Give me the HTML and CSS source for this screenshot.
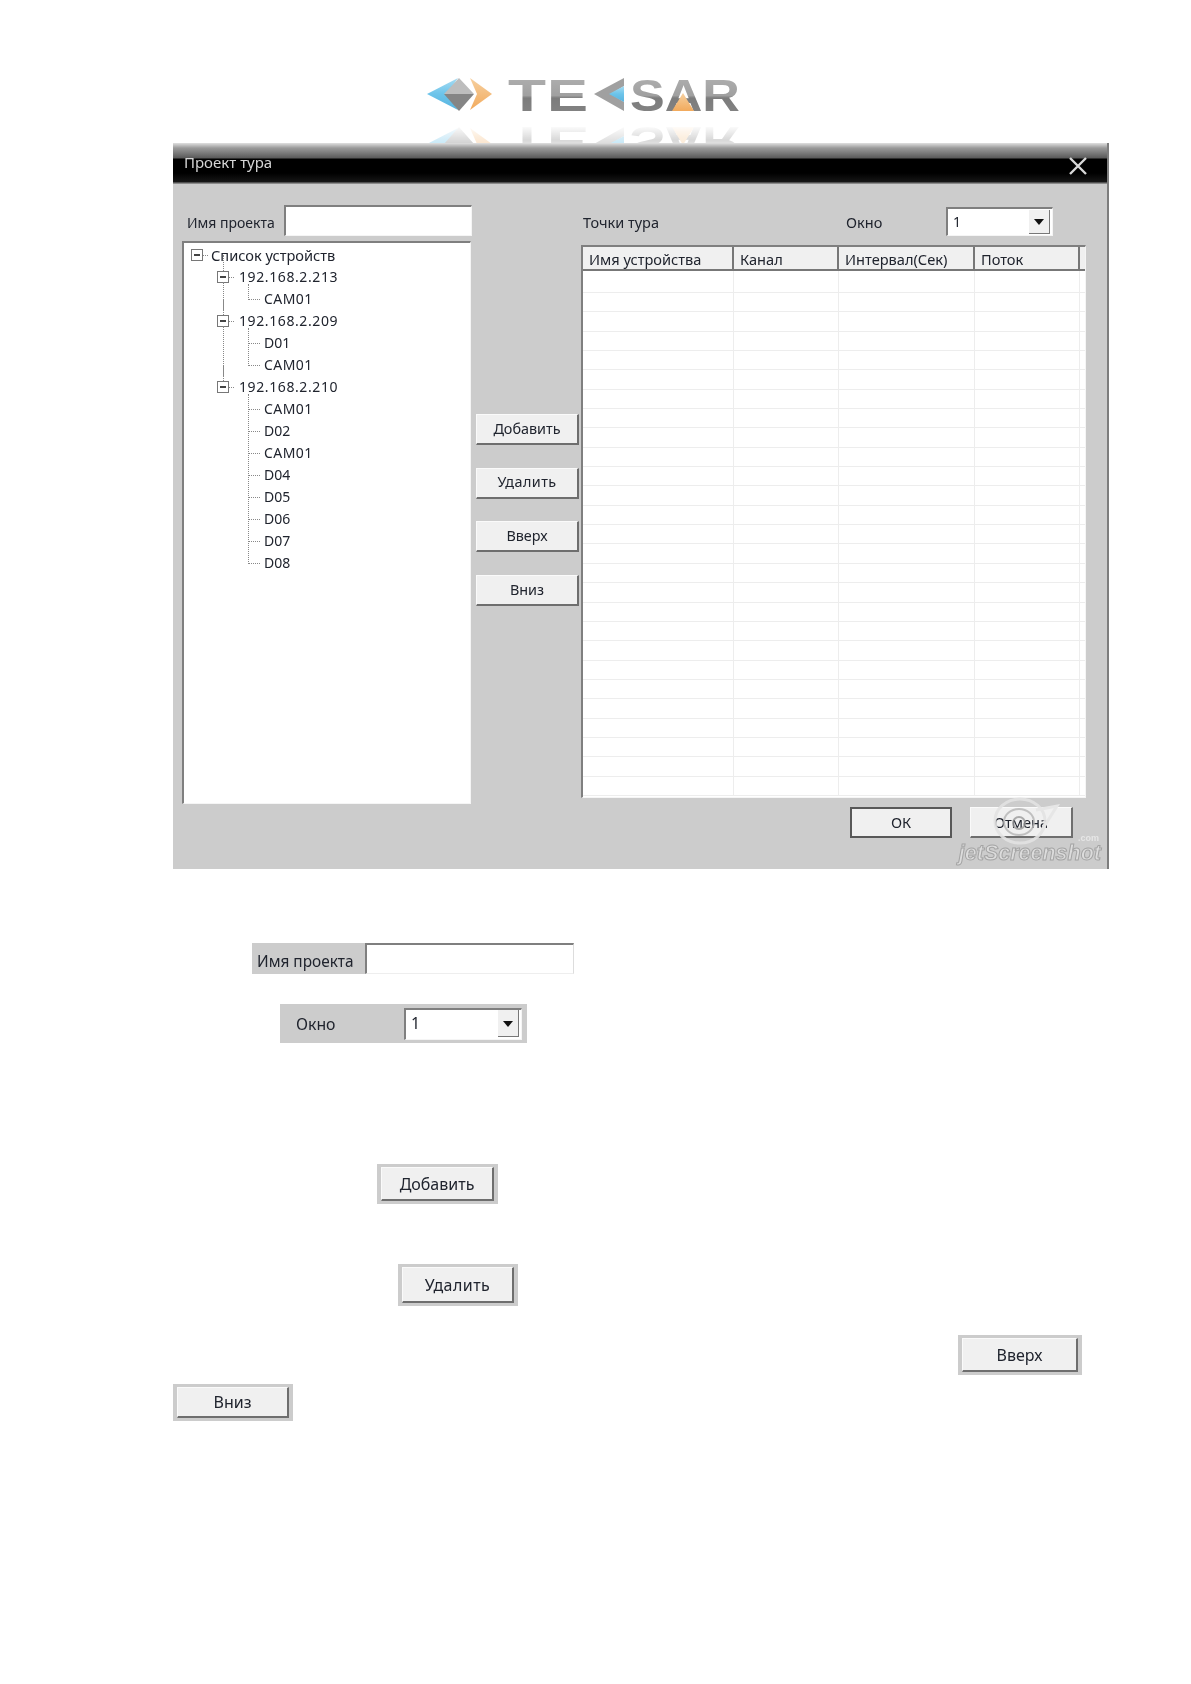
FILE: index.html
```html
<!DOCTYPE html>
<html lang="ru">
<head>
<meta charset="utf-8">
<title>Проект тура</title>
<link rel="stylesheet" href="styles.css">
</head>
<body>
<svg class="logo" viewBox="0 0 320 68" width="320" height="68" aria-label="TESAR">
  <defs>
    <linearGradient id="metal" x1="0" y1="0" x2="0" y2="1">
      <stop offset="0" stop-color="#b4b4b4"/><stop offset=".5" stop-color="#a0a0a0"/><stop offset=".55" stop-color="#7c7c7c"/><stop offset="1" stop-color="#868686"/>
    </linearGradient>
    <linearGradient id="blue" x1="0" y1="0" x2="0" y2="1">
      <stop offset="0" stop-color="#a8dcf2"/><stop offset=".5" stop-color="#6cc4ea"/><stop offset="1" stop-color="#58b4e0"/>
    </linearGradient>
    <linearGradient id="orange" x1="0" y1="0" x2="0" y2="1">
      <stop offset="0" stop-color="#f6d0a0"/><stop offset="1" stop-color="#f2aa5c"/>
    </linearGradient>
    <linearGradient id="fade" x1="0" y1="0" x2="0" y2="1">
      <stop offset="0" stop-color="#fff" stop-opacity=".04"/><stop offset="1" stop-color="#fff" stop-opacity=".36"/>
    </linearGradient>
    <mask id="reflectMask"><rect x="0" y="52" width="320" height="16" fill="url(#fade)"/></mask>
    <g id="mark">
      <polygon points="2,19 33,3 22,19 33,35" fill="url(#blue)"/>
      <polygon points="67,19 45,3 52,19 45,35" fill="url(#orange)"/>
      <polygon points="34,3 49,19 19,19" fill="#bdbdbd"/>
      <polygon points="19,19 49,19 34,36" fill="#858585"/>
      <text x="83" y="36" class="logo-text" fill="url(#metal)" textLength="38" lengthAdjust="spacingAndGlyphs">T</text>
      <text x="122" y="36" class="logo-text" fill="url(#metal)" textLength="41" lengthAdjust="spacingAndGlyphs">E</text>
      <polygon points="169,19 199,3 199,11 186,19 199,27 199,36" fill="#a0a0a0"/>
      <polygon points="184,19 199,11 199,27" fill="url(#blue)"/>
      <text x="205" y="36" class="logo-text" fill="url(#metal)" textLength="110" lengthAdjust="spacingAndGlyphs">SAR</text>
      <polygon points="258,18 269,36 247,36" fill="url(#orange)"/>
    </g>
  </defs>
  <use href="#mark"/>
  <g mask="url(#reflectMask)"><use href="#mark" transform="translate(0 88) scale(1 -1)"/></g>
</svg>

<main class="dialog">
  <header class="titlebar">
    <span class="title">Проект тура</span>
    <svg class="close" viewBox="0 0 18 18" width="18" height="18"><path d="M1 1 17 17M17 1 1 17" stroke="#d8d8d8" stroke-width="2.4" fill="none"/></svg>
  </header>
  <div class="dialog-body">
    <section class="col-left">
      <div class="name-row">
        <label class="name-label">Имя проекта</label>
        <div class="sunken name-input"></div>
      </div>
      <div class="sunken tree">
        <ul class="tree-root">
          <li class="root-node">
            <span class="node"><i class="toggle"></i><b class="dash"></b><span class="root-text">Список устройств</span></span>
            <ul class="level1">
              <li>
                <span class="node ip"><i class="toggle"></i><b class="dash"></b>192.168.2.213</span>
                <ul class="level2"><li class="cam">CAM01</li></ul>
              </li>
              <li>
                <span class="node ip"><i class="toggle"></i><b class="dash"></b>192.168.2.209</span>
                <ul class="level2"><li>D01</li><li class="cam">CAM01</li></ul>
              </li>
              <li>
                <span class="node ip"><i class="toggle"></i><b class="dash"></b>192.168.2.210</span>
                <ul class="level2"><li class="cam">CAM01</li><li>D02</li><li class="cam">CAM01</li><li>D04</li><li>D05</li><li>D06</li><li>D07</li><li>D08</li></ul>
              </li>
            </ul>
          </li>
        </ul>
      </div>
    </section>

    <section class="col-mid">
      <button class="btn">Добавить</button>
      <button class="btn btn-spaced">Удалить</button>
      <button class="btn">Вверх</button>
      <button class="btn">Вниз</button>
    </section>

    <section class="col-right">
      <div class="points-row">
        <span class="points-label">Точки тура</span>
        <span class="window-label">Окно</span>
        <div class="sunken select"><span class="select-value">1</span><span class="select-arrow"></span></div>
      </div>
      <div class="sunken table-wrap">
        <table class="grid">
          <thead><tr><th class="c1">Имя устройства</th><th class="c2">Канал</th><th class="c3">Интервал(Сек)</th><th class="c4">Поток</th><th class="c5"></th></tr></thead>
          <tbody>
            <tr><td></td><td></td><td></td><td></td><td></td></tr><tr><td></td><td></td><td></td><td></td><td></td></tr><tr><td></td><td></td><td></td><td></td><td></td></tr>
            <tr><td></td><td></td><td></td><td></td><td></td></tr><tr><td></td><td></td><td></td><td></td><td></td></tr><tr><td></td><td></td><td></td><td></td><td></td></tr>
            <tr><td></td><td></td><td></td><td></td><td></td></tr><tr><td></td><td></td><td></td><td></td><td></td></tr><tr><td></td><td></td><td></td><td></td><td></td></tr>
            <tr><td></td><td></td><td></td><td></td><td></td></tr><tr><td></td><td></td><td></td><td></td><td></td></tr><tr><td></td><td></td><td></td><td></td><td></td></tr>
            <tr><td></td><td></td><td></td><td></td><td></td></tr><tr><td></td><td></td><td></td><td></td><td></td></tr><tr><td></td><td></td><td></td><td></td><td></td></tr>
            <tr><td></td><td></td><td></td><td></td><td></td></tr><tr><td></td><td></td><td></td><td></td><td></td></tr><tr><td></td><td></td><td></td><td></td><td></td></tr>
            <tr><td></td><td></td><td></td><td></td><td></td></tr><tr><td></td><td></td><td></td><td></td><td></td></tr><tr><td></td><td></td><td></td><td></td><td></td></tr>
            <tr><td></td><td></td><td></td><td></td><td></td></tr><tr><td></td><td></td><td></td><td></td><td></td></tr><tr><td></td><td></td><td></td><td></td><td></td></tr>
            <tr><td></td><td></td><td></td><td></td><td></td></tr><tr><td></td><td></td><td></td><td></td><td></td></tr><tr><td></td><td></td><td></td><td></td><td></td></tr>
          </tbody>
        </table>
      </div>
      <div class="actions">
        <button class="btn btn-ok">ОК</button>
        <button class="btn btn-cancel">Отмена</button>
      </div>
    </section>
  </div>
  <div class="watermark">
    <svg class="swirl" viewBox="0 0 72 50" width="72" height="50">
      <ellipse cx="32" cy="25" rx="25" ry="22" fill="none" stroke="#e2e2e2" stroke-width="3" opacity=".9"/>
      <ellipse cx="31" cy="26" rx="15" ry="13" fill="none" stroke="#b4b4b4" stroke-width="2" opacity=".8"/>
      <circle cx="31" cy="27" r="6" fill="none" stroke="#999" stroke-width="2" opacity=".8"/>
      <path d="M54 34 69 10 48 14" fill="none" stroke="#e6e6e6" stroke-width="3"/>
    </svg>
    <span class="wm-com">.com</span>
    <span class="wm-text">jetScreenshot</span>
  </div>
</main>

<div class="frag-name">
  <span class="frag-name-label">Имя проекта</span>
  <div class="sunken frag-name-input"></div>
</div>

<div class="frag-window">
  <span class="frag-window-label">Окно</span>
  <div class="sunken select frag-select"><span class="select-value">1</span><span class="select-arrow"></span></div>
</div>

<div class="frag-btn frag-add"><button class="btn">Добавить</button></div>
<div class="frag-btn frag-del"><button class="btn btn-spaced">Удалить</button></div>
<div class="frag-line">
  <div class="frag-btn frag-up"><button class="btn">Вверх</button></div>
</div>
<div class="frag-btn frag-down"><button class="btn">Вниз</button></div>
</body>
</html>
```

FILE: styles.css
```css
* { box-sizing: border-box; }

html, body { margin: 0; padding: 0; }

body {
  width: 1191px;
  min-height: 1684px;
  background: #fff;
  color: #20242e;
  font: 14px/1 "Noto Sans", "Liberation Sans", sans-serif;
}

ul { list-style: none; margin: 0; padding: 0; }

/* logo */
.logo { display: block; margin: 75px 0 0 425px; filter: blur(.7px); }
.logo-text { font: bold 45px "Liberation Sans", sans-serif; }

/* dialog frame */
.dialog {
  position: relative;
  width: 936px;
  height: 726px;
  margin-left: 173px;
  background: #ccc;
  border-right: 2px solid #7d7d7d;
  filter: blur(.35px);
}

.titlebar {
  display: flex;
  align-items: center;
  justify-content: space-between;
  height: 41px;
  padding: 0 20px 0 11px;
  background: linear-gradient(#e0e0e0 0, #9a9a9a 5px, #5a5a5a 15px, #000 16px, #000 30px, #161616 39px, #8a8a8a 40px);
}
.title { color: #d6d6d6; font-size: 15px; position: relative; top: -1px; }
.close { position: relative; top: 2px; }

.dialog-body { display: flex; }

/* sunken control look */
.sunken {
  background: #fff;
  border-style: solid;
  border-width: 2px 1px 1px 2px;
  border-color: #7f7f7f #f5f5f5 #f5f5f5 #7f7f7f;
}

/* left column */
.col-left { width: 291px; margin-left: 9px; padding-top: 21px; }
.name-row { display: flex; align-items: center; height: 31px; }
.name-label { width: 102px; padding-left: 5px; position: relative; top: 2px; }
.name-input { width: 188px; height: 31px; }

.tree { width: 289px; height: 563px; margin-top: 5px; padding-top: 1px; font-size: 14px; overflow: hidden; }

.node { display: flex; align-items: center; height: 22px; }
.toggle {
  position: relative;
  flex: none;
  display: block;
  width: 12px;
  height: 12px;
  background: #fff;
  border: 1px solid #777;
}
.toggle::after {
  content: "";
  position: absolute;
  left: 2px;
  top: 4px;
  width: 6px;
  height: 2px;
  background: #444;
}
.dash { flex: none; width: 5px; margin: 0 5px 0 0; border-top: 1px dotted #888; }

.root-node > .node { padding-left: 7px; }
.root-node > .node .dash { margin-right: 3px; }
.root-text { font-size: 14.6px; }

.level1 { position: relative; }
.level1 > li { position: relative; }
.level1 > li > .node { padding-left: 33px; }
.ip { letter-spacing: .6px; }
.level1 > li::before {
  content: "";
  position: absolute;
  left: 39px;
  top: -11px;
  height: 16px;
  border-left: 1px dotted #888;
}
.level1 > li:not(:last-child)::after {
  content: "";
  position: absolute;
  left: 39px;
  top: 16px;
  bottom: 0;
  border-left: 1px dotted #888;
}

.level2 li {
  position: relative;
  height: 22px;
  line-height: 22px;
  padding-left: 80px;
}
.level2 .cam { letter-spacing: .45px; }
.level2 li::before {
  content: "";
  position: absolute;
  left: 64px;
  top: -11px;
  width: 11px;
  height: 22px;
  border-left: 1px dotted #888;
  border-bottom: 1px dotted #888;
}
.level2 li:first-child::before { top: -4px; height: 15px; }

/* middle column */
.col-mid {
  display: flex;
  flex-direction: column;
  gap: 22.7px;
  width: 103px;
  margin-left: 3px;
  padding-top: 230px;
  font-size: 14.4px;
}

.btn {
  display: block;
  width: 100%;
  height: 31px;
  padding: 0;
  background: #f0f0f0;
  border-style: solid;
  border-width: 1px 2px 2px 1px;
  border-color: #fafafa #6e6e6e #6e6e6e #fafafa;
  border-radius: 0;
  color: #20242e;
  font: inherit;
}
.btn-spaced { letter-spacing: .45px; }

/* right column */
.col-right { width: 506px; margin-left: 2px; padding-top: 23px; }
.points-row { display: flex; align-items: center; height: 29px; }
.points-label { width: 265px; padding-left: 2px; position: relative; top: 1px; font-size: 14.5px; }
.window-label { width: 100px; position: relative; top: 1px; font-size: 14.5px; }

.select {
  display: flex;
  align-items: center;
  justify-content: space-between;
  width: 107px;
  height: 29px;
  padding: 1px 2px 2px 5px;
}
.select-arrow {
  position: relative;
  display: block;
  width: 21px;
  height: 24px;
  background: #f0f0f0;
  border-right: 1px solid #777;
  border-bottom: 1px solid #777;
}
.select-arrow::after {
  content: "";
  position: absolute;
  left: 5px;
  top: 9px;
  border-style: solid;
  border-width: 6px 5px 0;
  border-color: #111 transparent transparent;
}

.table-wrap { width: 505px; height: 553px; margin-top: 9px; overflow: hidden; }
.grid { width: 503px; table-layout: fixed; border-collapse: collapse; font-size: 14.6px; }
.grid th {
  height: 23px;
  padding: 3px 0 0 6px;
  background: #f0f0f0;
  border-right: 2px solid #777;
  border-bottom: 2px solid #777;
  font-weight: 400;
  text-align: left;
  white-space: nowrap;
}
.grid .c1 { width: 150px; }
.grid .c2 { width: 105px; }
.grid .c3 { width: 136px; }
.grid .c4 { width: 105px; }
.grid .c5 { border-right: 0; padding: 0; }
.grid td { height: 19.35px; padding: 0; border-right: 1px solid #ededed; border-bottom: 1px solid #ededed; }
.grid tbody tr:first-child td { height: 22.5px; }

.actions { display: flex; justify-content: flex-end; gap: 18px; margin-top: 9px; padding-right: 14px; font-size: 14.6px; }
.btn-ok { width: 102px; border: 2px solid #585858; }
.btn-cancel { width: 103px; }

/* watermark over the dialog */
.watermark { position: absolute; right: 0; bottom: 0; width: 160px; height: 76px; pointer-events: none; }
.swirl { position: absolute; left: 41px; top: 3px; }
.wm-com { position: absolute; right: 8px; top: 41px; color: #e6e6e6; font: bold 9px/1 "Liberation Sans", sans-serif; }
.wm-text {
  position: absolute;
  right: 6px;
  bottom: 5px;
  color: #dcdcdc;
  font: italic bold 21.5px/1 "Liberation Sans", sans-serif;
  -webkit-text-stroke: 1px #a4a4a4;
  white-space: nowrap;
}

/* document fragments */
.frag-name { display: flex; width: 322px; height: 31px; margin: 74px 0 0 252px; filter: blur(.35px); }
.frag-name-label { display: flex; align-items: center; width: 113px; padding: 6px 0 0 5px; background: #ccc; font-size: 15.4px; }
.frag-name-input { width: 209px; height: 31px; border-right-color: #ddd; border-bottom-color: #eee; }

.frag-window {
  display: flex;
  align-items: center;
  width: 247px;
  height: 39px;
  margin: 30px 0 0 280px;
  padding-left: 16px;
  background: #ccc;
  font-size: 15.8px;
  filter: blur(.35px);
}
.frag-window-label { width: 108px; position: relative; top: 1px; }
.frag-select { width: 118px; height: 32px; }
.frag-select .select-arrow { height: 27px; }
.frag-select .select-arrow::after { top: 11px; }

.frag-btn { background: #ccc; font-size: 16px; padding: 3px 4px 3px 4px; filter: blur(.35px); }
.frag-btn .btn { height: 100%; }
.frag-add { width: 121px; height: 40px; margin: 121px 0 0 377px; }
.frag-del { width: 120px; height: 42px; margin: 60px 0 0 398px; }
.frag-line { display: flex; justify-content: flex-end; margin-top: 29px; padding-right: 109px; }
.frag-up { width: 124px; height: 40px; }
.frag-down { width: 120px; height: 37px; margin: 9px 0 0 173px; }
```
